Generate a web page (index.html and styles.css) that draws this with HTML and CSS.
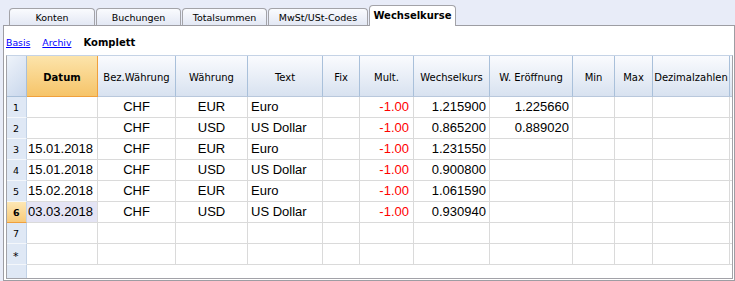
FILE: index.html
```html
<!DOCTYPE html>
<html>
<head>
<meta charset="utf-8">
<link rel="stylesheet" href="styles.css">
</head>
<body>
<div class="tabs">
  <div class="tab w1">Konten</div>
  <div class="tab w2">Buchungen</div>
  <div class="tab w3">Totalsummen</div>
  <div class="tab w4">MwSt/USt-Codes</div>
  <div class="tab active w5">Wechselkurse</div>
</div>
<div class="page">
  <div class="views">
    <a class="link" href="#">Basis</a>
    <a class="link" href="#">Archiv</a>
    <span class="current">Komplett</span>
  </div>
  <div class="grid">
    <div class="corner"></div>
    <div class="hd sel">Datum</div>
    <div class="hd">Bez.Währung</div>
    <div class="hd">Währung</div>
    <div class="hd">Text</div>
    <div class="hd">Fix</div>
    <div class="hd">Mult.</div>
    <div class="hd">Wechselkurs</div>
    <div class="hd">W. Eröffnung</div>
    <div class="hd">Min</div>
    <div class="hd">Max</div>
    <div class="hd">Dezimalzahlen</div>
    <div class="hd end"></div>

    <div class="rh">1</div>
    <div class="c date"></div>
    <div class="c ctr">CHF</div>
    <div class="c ctr">EUR</div>
    <div class="c txt">Euro</div>
    <div class="c"></div>
    <div class="c num neg">-1.00</div>
    <div class="c num">1.215900</div>
    <div class="c num">1.225660</div>
    <div class="c"></div>
    <div class="c"></div>
    <div class="c"></div>
    <div class="c end"></div>

    <div class="rh">2</div>
    <div class="c date"></div>
    <div class="c ctr">CHF</div>
    <div class="c ctr">USD</div>
    <div class="c txt">US Dollar</div>
    <div class="c"></div>
    <div class="c num neg">-1.00</div>
    <div class="c num">0.865200</div>
    <div class="c num">0.889020</div>
    <div class="c"></div>
    <div class="c"></div>
    <div class="c"></div>
    <div class="c end"></div>

    <div class="rh">3</div>
    <div class="c date">15.01.2018</div>
    <div class="c ctr">CHF</div>
    <div class="c ctr">EUR</div>
    <div class="c txt">Euro</div>
    <div class="c"></div>
    <div class="c num neg">-1.00</div>
    <div class="c num">1.231550</div>
    <div class="c num"></div>
    <div class="c"></div>
    <div class="c"></div>
    <div class="c"></div>
    <div class="c end"></div>

    <div class="rh">4</div>
    <div class="c date">15.01.2018</div>
    <div class="c ctr">CHF</div>
    <div class="c ctr">USD</div>
    <div class="c txt">US Dollar</div>
    <div class="c"></div>
    <div class="c num neg">-1.00</div>
    <div class="c num">0.900800</div>
    <div class="c num"></div>
    <div class="c"></div>
    <div class="c"></div>
    <div class="c"></div>
    <div class="c end"></div>

    <div class="rh">5</div>
    <div class="c date">15.02.2018</div>
    <div class="c ctr">CHF</div>
    <div class="c ctr">EUR</div>
    <div class="c txt">Euro</div>
    <div class="c"></div>
    <div class="c num neg">-1.00</div>
    <div class="c num">1.061590</div>
    <div class="c num"></div>
    <div class="c"></div>
    <div class="c"></div>
    <div class="c"></div>
    <div class="c end"></div>

    <div class="rh cur">6</div>
    <div class="c date focus">03.03.2018</div>
    <div class="c ctr">CHF</div>
    <div class="c ctr">USD</div>
    <div class="c txt">US Dollar</div>
    <div class="c"></div>
    <div class="c num neg">-1.00</div>
    <div class="c num">0.930940</div>
    <div class="c num"></div>
    <div class="c"></div>
    <div class="c"></div>
    <div class="c"></div>
    <div class="c end"></div>

    <div class="rh">7</div>
    <div class="c date"></div>
    <div class="c"></div>
    <div class="c"></div>
    <div class="c"></div>
    <div class="c"></div>
    <div class="c"></div>
    <div class="c"></div>
    <div class="c"></div>
    <div class="c"></div>
    <div class="c"></div>
    <div class="c"></div>
    <div class="c end"></div>

    <div class="rh star">*</div>
    <div class="c date"></div>
    <div class="c"></div>
    <div class="c"></div>
    <div class="c"></div>
    <div class="c"></div>
    <div class="c"></div>
    <div class="c"></div>
    <div class="c"></div>
    <div class="c"></div>
    <div class="c"></div>
    <div class="c"></div>
    <div class="c end"></div>

    <div class="rh fill"></div>
    <div class="blank"></div>
  </div>
</div>
</body>
</html>
```

FILE: styles.css
```css
* { box-sizing: border-box; }
html, body { margin: 0; padding: 0; }
body {
  width: 735px;
  height: 281px;
  overflow: hidden;
  background: #e8ecf8;
  font-family: "DejaVu Sans", sans-serif;
  color: #000;
}

.tabs {
  height: 25px;
  display: flex;
  align-items: flex-end;
  gap: 1px;
  padding-left: 9px;
}
.tab {
  height: 17px;
  border: 1px solid #a3a3a8;
  border-bottom: 0;
  border-radius: 4px 4px 0 0;
  background: linear-gradient(#fafbfe, #e3e8f4);
  font-size: 9.5px;
  display: flex;
  align-items: center;
  justify-content: center;
  padding-top: 1px;
}
.tab.active {
  height: 21px;
  margin-bottom: -1px;
  position: relative;
  z-index: 1;
  background: #fff;
  font-weight: bold;
  font-size: 10px;
  padding-top: 0;
  padding-bottom: 2px;
}
.w1 { width: 86px; }
.w2 { width: 85px; }
.w3 { width: 85px; }
.w4 { width: 100px; }
.w5 { width: 87px; }

.page {
  margin-left: 3px;
  width: 732px;
  height: 256px;
  border: 1px solid #9d9da3;
  background: #fff;
}

.views {
  height: 29px;
  display: flex;
  align-items: center;
  gap: 12px;
  padding-left: 2px;
  padding-top: 4px;
}
.link {
  color: #0000ff;
  text-decoration: underline;
  font-size: 9.3px;
}
.current {
  font-weight: bold;
  font-size: 10px;
}

.grid {
  margin-left: 2px;
  width: 727px;
  height: 224px;
  border: 1px solid #a2a2a8;
  border-top-color: #c5d3e6;
  display: grid;
  grid-template-columns: 20px 71px 78px 72px 75px 37px 54px 76px 83px 42px 38px 77px 1fr;
  grid-template-rows: 41px repeat(8, 21px) 1fr;
}

.corner {
  background: linear-gradient(135deg, #eef3fa, #c9d7ec);
  border-right: 1px solid #a9bfd8;
  border-bottom: 1px solid #a9bfd8;
}
.hd {
  background: linear-gradient(#fafbfe, #d8e2f0);
  border-right: 1px solid #a9c0da;
  border-bottom: 1px solid #b9c8dc;
  font-size: 10px;
  display: flex;
  align-items: center;
  justify-content: center;
  padding-top: 3px;
  white-space: nowrap;
  overflow: hidden;
}
.hd.sel {
  background: linear-gradient(#fce4ab, #f6c469);
  border-right: 1px solid #f0a03c;
  border-bottom: 1px solid #f0a03c;
  font-weight: bold;
}
.hd.end { border-right: 0; }

.rh {
  background: #dfe8f5;
  border-right: 1px solid #c2d2e6;
  border-bottom: 1px solid #f4f7fb;
  font-size: 9.5px;
  display: flex;
  align-items: center;
  padding-left: 6px;
  padding-top: 1px;
}
.rh.cur {
  background: linear-gradient(#fde7b4, #f8ca7a);
  border-bottom: 1px solid #f0a03c;
  font-weight: bold;
}
.rh.star { font-size: 11px; padding-top: 4px; }
.rh.fill { border-bottom: 0; }

.c {
  border-right: 1px solid #dadada;
  border-bottom: 1px solid #dadada;
  font-family: "Liberation Sans", Arial, sans-serif;
  font-size: 13px;
  line-height: 20px;
  white-space: nowrap;
  overflow: hidden;
}
.c.end { border-right: 0; }
.date { padding-left: 1px; }
.focus { background: #e4e4f4; }
.ctr { text-align: center; }
.txt { padding-left: 3px; }
.num { text-align: right; padding-right: 3px; }
.neg { color: #ff0000; padding-right: 4px; }

.blank {
  grid-column: 2 / -1;
  background: #fff;
}
```
